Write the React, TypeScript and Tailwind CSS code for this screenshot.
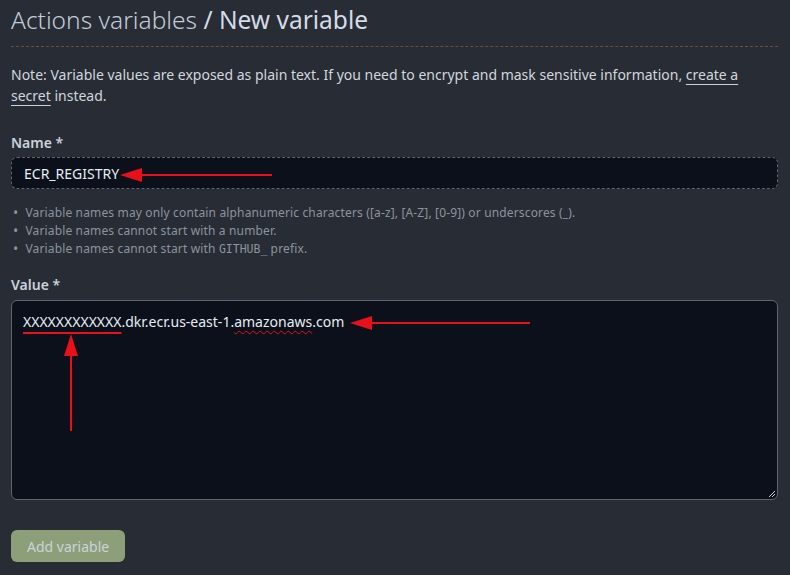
import React from 'react';

const Arrow: React.FC<{ className: string; dir: 'left' | 'up'; len: number }> = ({ className, dir, len }) => {
  if (dir === 'left') {
    return (
      <svg className={className} width={len} height="14" viewBox={`0 0 ${len} 14`}>
        <line x1="18" y1="7" x2={len} y2="7" stroke="#e8101a" strokeWidth="2" />
        <polygon points="0,7 22,0 22,14" fill="#e8101a" />
      </svg>
    );
  }
  return (
    <svg className={className} width="16" height={len} viewBox={`0 0 16 ${len}`}>
      <line x1="8" y1="18" x2="8" y2={len} stroke="#e8101a" strokeWidth="2" />
      <polygon points="8,0 1,22 15,22" fill="#e8101a" />
    </svg>
  );
};

export default function App() {
  return (
    <div className="w-[790px] h-[575px] bg-[#282c35] text-[#c9d1d9] font-['Noto_Sans',sans-serif] overflow-hidden relative">
      <div className="pl-[11px] pr-[12px]">
        <div className="pt-[2px] pb-[8px] border-b border-dashed border-[#6e4c3c]">
          <h1 className="text-[24.5px] leading-[36px] font-light text-[#c2cbd6]">
            Actions variables <span className="font-normal text-[#d4dce6]">/ New variable</span>
          </h1>
        </div>

        <p className="mt-[17px] text-[14px] leading-[21px] text-[#d0d7de]">
          Note: Variable values are exposed as plain text. If you need to encrypt and mask sensitive information,{' '}
          <span className="underline underline-offset-4 decoration-[#c9d1d9]">create a secret</span> instead.
        </p>

        <label className="block mt-[26px] text-[14px] leading-[21px] font-semibold text-[#c9d1d9]">Name *</label>
        <div className="relative mt-[4px] h-[32px] rounded-[6px] border border-dashed border-[#5f6470] bg-[#0b101a] flex items-center px-[12px]">
          <span className="text-[14px] text-[#e6edf3]">ECR_REGISTRY</span>
          <Arrow className="absolute left-[108px] top-[10px]" dir="left" len={152} />
        </div>

        <ul className="mt-[15px] pl-[2px] text-[12px] leading-[18px] text-[#8b949e] tracking-[0.15px]">
          <li className="flex gap-[7px]"><span className="text-[14px] leading-[18px]">•</span><span>Variable names may only contain alphanumeric characters ([a-z], [A-Z], [0-9]) or underscores (_).</span></li>
          <li className="flex gap-[7px]"><span className="text-[14px] leading-[18px]">•</span><span>Variable names cannot start with a number.</span></li>
          <li className="flex gap-[7px]"><span className="text-[14px] leading-[18px]">•</span><span>Variable names cannot start with <span className="font-['DejaVu_Sans_Mono',monospace] text-[11.5px] tracking-normal">GITHUB_</span> prefix.</span></li>
        </ul>

        <label className="block mt-[16px] text-[14px] leading-[21px] font-semibold text-[#c9d1d9]">Value *</label>
        <div className="relative mt-[5px] h-[200px] rounded-[6px] border border-[#5f6470] bg-[#0b101a] px-[11px] pt-[8px]">
          <span className="text-[14px] leading-[24px] text-[#e6edf3]">
            <span className="underline decoration-[#e8101a] decoration-2 underline-offset-[5px]">XXXXXXXXXXXX</span>
            .dkr.ecr.us-east-1.
            <span className="underline decoration-wavy decoration-[#e8101a] decoration-1 underline-offset-[3px]">amazonaws</span>
            .com
          </span>
          <Arrow className="absolute left-[338px] top-[15px]" dir="left" len={180} />
          <Arrow className="absolute left-[51px] top-[33px]" dir="up" len={97} />
          <svg className="absolute right-[1px] bottom-[1px]" width="8" height="8" viewBox="0 0 8 8">
            <line x1="1" y1="7" x2="7" y2="1" stroke="#c9d1d9" strokeWidth="1" />
            <line x1="4" y1="7" x2="7" y2="4" stroke="#c9d1d9" strokeWidth="1" />
          </svg>
        </div>

        <button className="mt-[30px] h-[32px] px-[16px] rounded-[6px] bg-[#8d9f78] text-[14px] text-[#c9d3de]">
          Add variable
        </button>
      </div>
    </div>
  );
}
